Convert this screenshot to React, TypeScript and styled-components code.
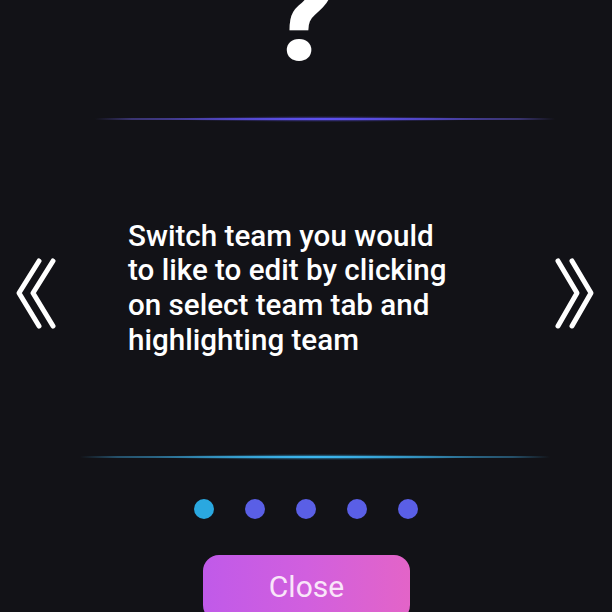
import React from "react";
import styled, { createGlobalStyle } from "styled-components";

const Global = createGlobalStyle`
  html, body { margin: 0; padding: 0; background: #121217; }
  body { font-family: Roboto, "Noto Sans", sans-serif; }
`;

const Page = styled.div`
  width: 612px;
  height: 612px;
  overflow: hidden;
  background: #121217;
  display: flex;
  flex-direction: column;
  align-items: flex-start;
  & > * {
    flex-shrink: 0;
  }
`;

const Mark = styled.div`
  margin-top: -35px;
  margin-left: 267px;
  height: 100px;
  font-family: Roboto, sans-serif;
  font-weight: 900;
  font-size: 134px;
  line-height: 100px;
  color: #ffffff;
`;

const GlowLine = styled.div<{ $left: number; $width: number; $core: string; $edge: string; $top: number }>`
  position: relative;
  margin-top: ${(p) => p.$top}px;
  margin-left: ${(p) => p.$left}px;
  width: ${(p) => p.$width}px;
  height: 2px;
  background: linear-gradient(90deg, transparent 0%, ${(p) => p.$edge} 8%, ${(p) => p.$core} 50%, ${(p) => p.$edge} 92%, transparent 100%);
  &::after {
    content: "";
    position: absolute;
    left: 15%;
    right: 15%;
    top: -2px;
    height: 6px;
    border-radius: 50%;
    background: radial-gradient(ellipse at center, ${(p) => p.$core} 0%, transparent 70%);
    opacity: 0.8;
  }
`;

const Middle = styled.div`
  display: flex;
  align-items: center;
  width: 612px;
  height: 336px;
`;

const Chevron = styled.svg`
  flex: none;
  width: 44px;
  height: 76px;
  margin-top: 12px;
`;

const Message = styled.p`
  margin: 0 0 0 72px;
  width: 326px;
  font-family: Roboto, sans-serif;
  font-weight: 500;
  font-size: 29.6px;
  line-height: 34.7px;
  color: #ffffff;
  flex: none;
`;

const Spacer = styled.div`
  flex: 1;
`;

const Dots = styled.div`
  display: flex;
  gap: 31px;
  margin-top: 41px;
  margin-left: 194px;
`;

const Dot = styled.span<{ $active?: boolean }>`
  width: 20px;
  height: 20px;
  border-radius: 50%;
  background: ${(p) => (p.$active ? "#2aa8e0" : "#5a5fe6")};
`;

const CloseButton = styled.button`
  margin-top: 36px;
  margin-left: 203px;
  width: 207px;
  height: 66px;
  border: none;
  border-radius: 16px;
  background: linear-gradient(90deg, #c05ae9 0%, #d15fde 50%, #e364c8 100%);
  color: #f9e6f9;
  font-family: Roboto, sans-serif;
  font-size: 30px;
  font-weight: 400;
  display: flex;
  align-items: flex-start;
  justify-content: center;
  padding: 14px 0 0 0;
`;

export default function App() {
  return (
    <Page>
      <Global />
      <Mark>?</Mark>
      <GlowLine $top={53} $left={95} $width={460} $core="#5d50ee" $edge="#3a3470" />
      <Middle>
        <Chevron viewBox="0 0 44 76" style={{ marginLeft: 12 }}>
          <g fill="none" stroke="#ffffff" strokeWidth={5} strokeLinecap="round" strokeLinejoin="round">
            <polyline points="27,5 7,37 27,70" />
            <polyline points="41,5 21,37 41,70" />
          </g>
        </Chevron>
        <Message>
          Switch team you would to like to edit by clicking on select team tab and highlighting team
        </Message>
        <Spacer />
        <Chevron viewBox="0 0 44 76" style={{ marginRight: 14 }}>
          <g fill="none" stroke="#ffffff" strokeWidth={5} strokeLinecap="round" strokeLinejoin="round">
            <polyline points="4,5 23,37 4,70" />
            <polyline points="18,5 37,37 18,70" />
          </g>
        </Chevron>
      </Middle>
      <GlowLine $top={0} $left={80} $width={470} $core="#3cb6ee" $edge="#25506a" />
      <Dots>
        <Dot $active />
        <Dot />
        <Dot />
        <Dot />
        <Dot />
      </Dots>
      <CloseButton>Close</CloseButton>
    </Page>
  );
}
